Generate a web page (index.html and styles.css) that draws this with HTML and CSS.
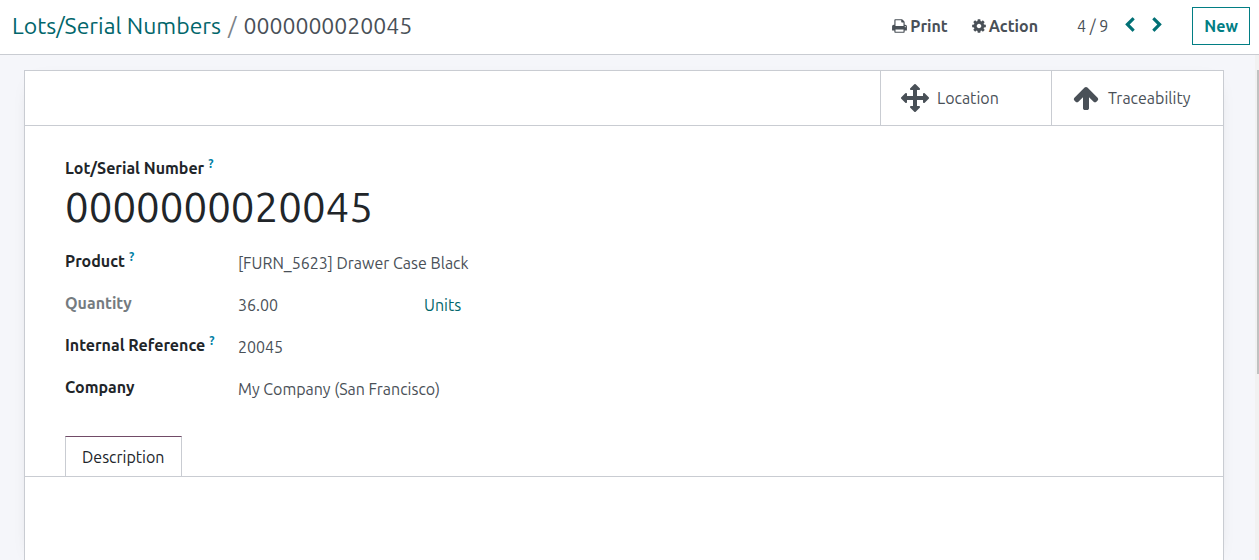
FILE: index.html
```html
<!DOCTYPE html>
<html lang="en">
<head>
<meta charset="utf-8">
<meta name="viewport" content="width=device-width, initial-scale=1">
<title>Lots/Serial Numbers</title>
<link rel="stylesheet" href="styles.css">
</head>
<body>
<header class="control-panel">
  <nav class="breadcrumb" aria-label="Breadcrumb">
    <a class="breadcrumb-link" href="#">Lots/Serial Numbers</a>
    <span class="breadcrumb-separator">/</span>
    <span>0000000020045</span>
  </nav>
  <div class="actions">
    <button class="menu-button" type="button"><svg class="icon" viewBox="0 0 1664 1792" width="15" height="16" aria-hidden="true"><path d="M384 1536h896v-256h-896v256zm0-640h896v-384h-160q-40 0-68-28t-28-68v-160h-640v640zm1152 64q0-26-19-45t-45-19-45 19-19 45 19 45 45 19 45-19 19-45zm128 0v416q0 13-9.5 22.500t-22.500 9.500h-224v160q0 40-28 68t-68 28h-960q-40 0-68-28t-28-68v-160h-224q-13 0-22.500-9.500t-9.500-22.500v-416q0-79 56.500-135.500t135.500-56.500h64v-544q0-40 28-68t68-28h672q40 0 88 20t76 48l152 152q28 28 48 76t20 88v256h64q79 0 135.500 56.500t56.500 135.500z"/></svg>Print</button>
    <button class="menu-button" type="button"><svg class="icon" viewBox="128 0 1536 1792" width="14" height="16" aria-hidden="true"><path d="M1152 896q0-106-75-181t-181-75-181 75-75 181 75 181 181 75 181-75 75-181zm512-109v222q0 12-8 23t-20 13l-185 28q-19 54-39 91 35 50 107 138 10 12 10 25t-9 23q-27 37-99 108t-94 71q-12 0-26-9l-138-108q-44 23-91 38-16 136-29 186-7 28-36 28h-222q-14 0-24.500-8.500t-11.500-21.500l-28-184q-49-16-90-37l-141 107q-10 9-25 9-14 0-25-11-126-114-165-168-7-10-7-23 0-12 8-23 15-21 51-66.500t54-70.500q-27-50-41-99l-183-27q-13-2-21-12.500t-8-23.500v-222q0-12 8-23t19-13l186-28q14-46 39-92-40-57-107-138-10-12-10-24 0-10 9-23 26-36 98.500-107.500t94.500-71.500q13 0 26 10l138 107q44-23 91-38 16-136 29-186 7-28 36-28h222q14 0 24.500 8.500t11.500 21.500l28 184q49 16 90 37l142-107q9-9 24-9 13 0 25 10 129 119 165 170 7 8 7 22 0 12-8 23-15 21-51 66.500t-54 70.500q26 50 41 98l183 28q13 2 21 12.500t8 23.500z"/></svg>Action</button>
    <div class="pager">
      <span class="pager-count">4 / 9</span>
      <button class="pager-button" type="button" aria-label="Previous"><svg class="icon" viewBox="410 0 1040 1792" width="10" height="16" aria-hidden="true"><path d="M1427 301l-531 531 531 531q19 19 19 45t-19 45l-166 166q-19 19-45 19t-45-19l-742-742q-19-19-19-45t19-45l742-742q19-19 45-19t45 19l166 166q19 19 19 45t-19 45z"/></svg></button>
      <button class="pager-button" type="button" aria-label="Next"><svg class="icon" viewBox="344 0 1040 1792" width="10" height="16" aria-hidden="true"><path d="M1363 877l-742 742q-19 19-45 19t-45-19l-166-166q-19-19-19-45t19-45l531-531-531-531q-19-19-19-45t19-45l166-166q19-19 45-19t45 19l742 742q19 19 19 45t-19 45z"/></svg></button>
    </div>
    <button class="new-button" type="button">New</button>
  </div>
</header>
<div class="content">
  <main class="view">
    <div class="sheet">
      <div class="button-box">
        <button class="stat-button" type="button"><svg class="icon" viewBox="0 0 1792 1792" width="28" height="28" aria-hidden="true"><path d="M1792 896q0 26-19 45l-256 256q-19 19-45 19t-45-19-19-45v-128h-384v384h128q26 0 45 19t19 45-19 45l-256 256q-19 19-45 19t-45-19l-256-256q-19-19-19-45t19-45 45-19h128v-384h-384v128q0 26-19 45t-45 19-45-19l-256-256q-19-19-19-45t19-45l256-256q19-19 45-19t45 19 19 45v128h384v-384h-128q-26 0-45-19t-19-45 19-45l256-256q19-19 45-19t45 19l256 256q19 19 19 45t-19 45-45 19h-128v384h384v-128q0-26 19-45t45-19 45 19l256 256q19 19 19 45z"/></svg>Location</button>
        <button class="stat-button" type="button"><svg class="icon" viewBox="0 0 1792 1792" width="28" height="28" aria-hidden="true"><path d="M1675 971q0 51-37 90l-75 75q-38 38-91 38-54 0-90-38l-294-293v704q0 52-37.500 84.500t-90.500 32.500h-128q-53 0-90.500-32.500t-37.500-84.500v-704l-294 293q-36 38-90 38t-90-38l-75-75q-38-38-38-90 0-53 38-91l651-651q35-37 90-37 54 0 91 37l651 651q37 39 37 91z"/></svg>Traceability</button>
      </div>
      <div class="title">
        <div class="label">Lot/Serial Number<sup class="help">?</sup></div>
        <h1 class="serial">0000000020045</h1>
      </div>
      <dl class="fields">
        <dt class="label">Product<sup class="help">?</sup></dt>
        <dd class="value">[FURN_5623] Drawer Case Black</dd>
        <dt class="label label-muted">Quantity</dt>
        <dd class="value quantity"><span>36.00</span><a class="unit" href="#">Units</a></dd>
        <dt class="label">Internal Reference<sup class="help">?</sup></dt>
        <dd class="value">20045</dd>
        <dt class="label">Company</dt>
        <dd class="value">My Company (San Francisco)</dd>
      </dl>
      <div class="tabs" role="tablist">
        <button class="tab" type="button" role="tab" aria-selected="true">Description</button>
      </div>
    </div>
  </main>
  <div class="scroll-track" aria-hidden="true"><div class="scroll-thumb"></div></div>
</div>
</body>
</html>
```
FILE: styles.css
```css
* {
  box-sizing: border-box;
}

body {
  margin: 0;
  height: 100vh;
  display: flex;
  flex-direction: column;
  overflow: hidden;
  background: #f5f6fa;
  color: #495057;
  font: 16px/24px Ubuntu, "Noto Sans", sans-serif;
}

button {
  padding: 0;
  border: 0;
  background: none;
  color: inherit;
  font: inherit;
}

a {
  color: #01666b;
  text-decoration: none;
}

.icon {
  display: block;
  flex: none;
  fill: currentColor;
}

.control-panel {
  display: flex;
  align-items: center;
  justify-content: space-between;
  padding: 7px 9px 9px 12px;
  border-bottom: 1px solid #c9ccd2;
  background: #fff;
}

.breadcrumb {
  display: flex;
  gap: 7px;
  font-size: 23px;
  line-height: 32px;
}

.breadcrumb-separator {
  color: #7c8288;
}

.actions {
  display: flex;
  align-items: center;
}

.menu-button {
  display: flex;
  align-items: center;
  gap: 3px;
  margin-right: 24px;
  font-weight: 600;
}

.pager {
  display: flex;
  align-items: center;
  gap: 17px;
  margin: 0 30px 0 15px;
}

.pager-button {
  padding-bottom: 2px;
  color: #017075;
}

.new-button {
  height: 38px;
  padding: 0 11px;
  border: 1px solid #017e84;
  color: #017e84;
  font-weight: 600;
}

.content {
  flex: 1;
  display: flex;
  min-height: 0;
}

.view {
  flex: 1;
  display: flex;
  padding: 15px 31px 0 24px;
}

.sheet {
  flex: 1;
  border: 1px solid #c9ccd2;
  border-bottom: 0;
  background: #fff;
  box-shadow: 0 5px 20px -15px rgba(0, 0, 0, 0.4);
}

.button-box {
  display: flex;
  justify-content: flex-end;
  border-bottom: 1px solid #c9ccd2;
}

.stat-button {
  display: flex;
  align-items: center;
  gap: 8px;
  width: 171px;
  height: 54px;
  padding: 0 20px;
  border-left: 1px solid #c9ccd2;
}

.stat-button:last-child {
  width: 172px;
}

.title {
  padding: 30px 40px 0;
}

.label {
  color: #212529;
  font-weight: 600;
}

.label-muted {
  color: #757b80;
}

.help {
  margin-left: 4px;
  color: #0180a5;
  font-size: 12px;
  line-height: 0;
}

.serial {
  margin: 0;
  color: #212529;
  font-size: 42px;
  font-weight: 400;
  line-height: 54px;
}

.fields {
  display: grid;
  grid-template-columns: 173px 1fr;
  row-gap: 16px;
  margin: 0;
  padding: 15px 40px 0;
}

.value {
  margin: 0;
  padding-top: 2px;
}

.quantity {
  display: grid;
  grid-template-columns: 186px auto;
  justify-content: start;
}

.tabs {
  display: flex;
  margin-top: 35px;
  padding: 0 40px;
  border-bottom: 1px solid #c9ccd2;
}

.tab {
  height: 40px;
  padding: 0 16px;
  border: 1px solid #c9ccd2;
  border-top-color: #714b67;
  border-bottom: 0;
  color: #212529;
}

.scroll-track {
  width: 4px;
  padding: 15px 0 0 2px;
  background: #f1f1f1;
}

.scroll-thumb {
  height: 62%;
  background: #c1c1c1;
}
```
